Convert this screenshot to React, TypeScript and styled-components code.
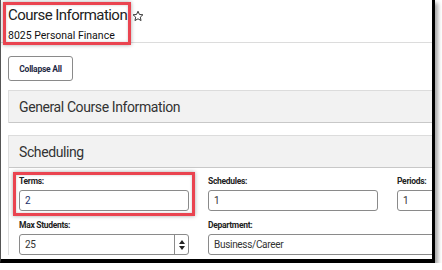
import React from "react";
import styled, { createGlobalStyle } from "styled-components";

const Global = createGlobalStyle`
  html, body { margin: 0; padding: 0; background: #ffffff; }
  body { font-family: Roboto, "Liberation Sans", Arial, sans-serif; }
  * { box-sizing: border-box; }
`;

const Frame = styled.div`
  position: relative;
  width: 435px;
  height: 263px;
  border-left: 1px solid #555;
  border-right: 3px solid #000;
  border-bottom: 4px solid #000;
  box-shadow: 3px 3px 4px rgba(0, 0, 0, 0.35);
  overflow: hidden;
  background: #fff;
`;

const Header = styled.div`
  height: 43px;
  border-bottom: 1px solid #dcdcdc;
  padding: 6px 0 0 7px;
`;

const TitleRow = styled.div`
  display: flex;
  align-items: center;
  gap: 5px;
`;

const Title = styled.h1`
  margin: 0;
  font-size: 15px;
  font-weight: 400;
  line-height: 19px;
  letter-spacing: -0.55px;
  color: #222;
`;

const Subtitle = styled.div`
  margin-top: 4px;
  font-size: 10.5px;
  line-height: 13px;
  color: #111;
`;

const Toolbar = styled.div`
  padding: 13px 0 0 7px;
`;

const Button = styled.button`
  height: 25px;
  width: 65px;
  border: 1px solid #8a8a8a;
  border-radius: 3px;
  background: #fff;
  font-family: Roboto, "Liberation Sans", Arial, sans-serif;
  font-size: 8.5px;
  font-weight: 700;
  letter-spacing: -0.25px;
  color: #1f2a44;
  padding: 0;
`;

const Panel = styled.div<{ $gap: number }>`
  margin: ${(p) => p.$gap}px -30px 0 7px;
  border-left: 1px solid #dedede;
`;

const PanelHead = styled.div`
  height: 33px;
  background: #f2f2f2;
  border-top: 1px solid #dcdcdc;
  border-bottom: 1px solid #c8c8c8;
  padding-left: 10px;
  display: flex;
  align-items: center;
  font-size: 14px;
  letter-spacing: -0.4px;
  color: #333;
`;

const PanelBody = styled.div`
  padding: 8px 0 0 10px;
  display: grid;
  grid-template-columns: 170px 170px 170px;
  column-gap: 19px;
  row-gap: 9px;
`;

const Field = styled.div`
  display: flex;
  flex-direction: column;
`;

const Label = styled.label`
  font-size: 8.5px;
  font-weight: 700;
  line-height: 11px;
  letter-spacing: -0.3px;
  color: #222;
  margin-bottom: 3px;
`;

const Input = styled.div<{ $accent?: boolean; $wide?: boolean }>`
  position: relative;
  height: 21px;
  border: 1px solid #8a8a8a;
  border-radius: 3px;
  padding-left: 5px;
  display: flex;
  align-items: center;
  font-size: 10px;
  letter-spacing: -0.3px;
  color: ${(p) => (p.$accent ? "#22306a" : "#333")};
  width: ${(p) => (p.$wide ? "260px" : "auto")};
`;

const Spinner = styled.div`
  position: absolute;
  right: 0;
  top: 0;
  bottom: 0;
  width: 14px;
  border-left: 1px solid #8a8a8a;
  display: flex;
  flex-direction: column;
  align-items: center;
  justify-content: center;
  gap: 2px;
`;

const Tri = styled.div<{ $down?: boolean }>`
  width: 0;
  height: 0;
  border-left: 3px solid transparent;
  border-right: 3px solid transparent;
  ${(p) => (p.$down ? "border-top: 4px solid #222;" : "border-bottom: 4px solid #222;")}
`;

const Highlight = styled.div<{ $x: number; $y: number; $w: number; $h: number }>`
  position: absolute;
  left: ${(p) => p.$x}px;
  top: ${(p) => p.$y}px;
  width: ${(p) => p.$w}px;
  height: ${(p) => p.$h}px;
  border: 3px solid #ea4450;
  box-shadow: 0 0 4px rgba(0, 0, 0, 0.35), inset 0 0 3px rgba(0, 0, 0, 0.2);
  pointer-events: none;
`;

const StarIcon = () => (
  <svg width="12" height="12" viewBox="0 0 24 24" fill="none" stroke="#222" strokeWidth="1.8" strokeLinejoin="round">
    <polygon points="12,2.5 14.9,8.9 21.8,9.6 16.6,14.3 18.1,21.1 12,17.6 5.9,21.1 7.4,14.3 2.2,9.6 9.1,8.9" />
  </svg>
);

export default function App() {
  return (
    <>
      <Global />
      <Frame>
        <Header>
          <TitleRow>
            <Title>Course Information</Title>
            <StarIcon />
          </TitleRow>
          <Subtitle>8025 Personal Finance</Subtitle>
        </Header>
        <Toolbar>
          <Button>Collapse All</Button>
        </Toolbar>
        <Panel $gap={9}>
          <PanelHead>General Course Information</PanelHead>
        </Panel>
        <Panel $gap={12}>
          <PanelHead>Scheduling</PanelHead>
          <PanelBody>
            <Field>
              <Label>Terms:</Label>
              <Input $accent>2</Input>
            </Field>
            <Field>
              <Label>Schedules:</Label>
              <Input>1</Input>
            </Field>
            <Field>
              <Label>Periods:</Label>
              <Input>1</Input>
            </Field>
            <Field>
              <Label>Max Students:</Label>
              <Input>
                25
                <Spinner>
                  <Tri />
                  <Tri $down />
                </Spinner>
              </Input>
            </Field>
            <Field>
              <Label>Department:</Label>
              <Input $wide>Business/Career</Input>
            </Field>
          </PanelBody>
        </Panel>
        <Highlight $x={2} $y={2} $w={128} $h={43} />
        <Highlight $x={12} $y={172} $w={182} $h={44} />
      </Frame>
    </>
  );
}
